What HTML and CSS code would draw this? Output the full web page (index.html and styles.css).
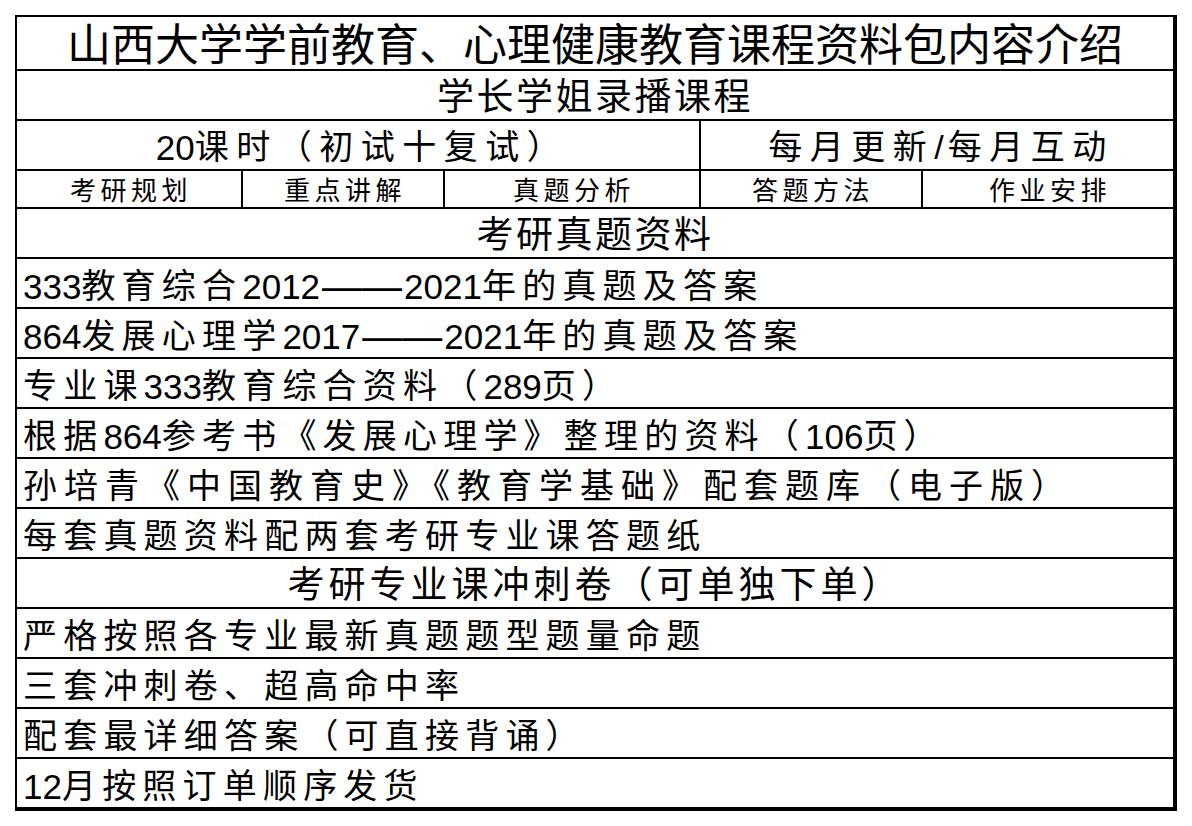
FILE: index.html
```html
<!DOCTYPE html>
<html lang="zh-CN">
<head>
<meta charset="utf-8">
<title>山西大学学前教育、心理健康教育课程资料包内容介绍</title>
<link rel="stylesheet" href="styles.css">
</head>
<body>
<div class="sheet">
  <div class="row title">山西大学学前教育、心理健康教育课程资料包内容介绍</div>
  <div class="row head">学长学姐录播课程</div>
  <div class="row split">
    <div class="cell mid"><span class="d">20</span>课时（初试十复试）</div>
    <div class="cell mid">每月更新<span class="s">/</span>每月互动</div>
  </div>
  <div class="row five">
    <div class="cell sm">考研规划</div>
    <div class="cell sm">重点讲解</div>
    <div class="cell sm">真题分析</div>
    <div class="cell sm">答题方法</div>
    <div class="cell sm">作业安排</div>
  </div>
  <div class="row head">考研真题资料</div>
  <div class="row body"><span class="d">333</span>教育综合<span class="d">2012</span><span class="dash">——</span><span class="d">2021</span>年的真题及答案</div>
  <div class="row body"><span class="d">864</span>发展心理学<span class="d">2017</span><span class="dash">——</span><span class="d">2021</span>年的真题及答案</div>
  <div class="row body">专业课<span class="d">333</span>教育综合资料（<span class="d">289</span>页）</div>
  <div class="row body">根据<span class="d">864</span>参考书《发展心理学》整理的资料（<span class="d">106</span>页）</div>
  <div class="row body wide">孙培青《中国教育史》《教育学基础》配套题库（电子版）</div>
  <div class="row body">每套真题资料配两套考研专业课答题纸</div>
  <div class="row head wide">考研专业课冲刺卷（可单独下单）</div>
  <div class="row body">严格按照各专业最新真题题型题量命题</div>
  <div class="row body">三套冲刺卷、超高命中率</div>
  <div class="row body">配套最详细答案（可直接背诵）</div>
  <div class="row body"><span class="d">12</span>月按照订单顺序发货</div>
</div>
</body>
</html>
```

FILE: styles.css
```css
html, body {
  margin: 0;
  padding: 0;
  background: #ffffff;
}

body {
  font-family: "Liberation Sans", "Noto Sans CJK SC", sans-serif;
  color: #000000;
}

.sheet {
  margin: 15px 0 0 15px;
  width: 1156px;
  border-left: 2px solid #000;
  border-top: 2px solid #000;
  border-right: 4px solid #000;
  border-bottom: 4px solid #000;
  display: flex;
  flex-direction: column;
}

.row {
  box-sizing: border-box;
  height: 50px;
  border-top: 2px solid #000;
  display: flex;
  align-items: center;
  white-space: nowrap;
}

.title {
  height: 52px;
  border-top: none;
  justify-content: center;
  font-size: 44px;
  line-height: 1;
  padding-top: 5px;
}

.head {
  justify-content: center;
  font-size: 37px;
  letter-spacing: 2.5px;
  line-height: 1;
  padding-top: 4px;
}

.head.wide {
  letter-spacing: 4px;
}

.split {
  display: grid;
  grid-template-columns: 682px 474px;
  align-items: stretch;
}

.five {
  height: 38px;
  display: grid;
  grid-template-columns: 224px 202px 256px 222px 252px;
  align-items: stretch;
}

.cell {
  box-sizing: border-box;
  display: flex;
  align-items: center;
  justify-content: center;
  line-height: 1;
}

.cell + .cell {
  border-left: 2px solid #000;
}

.mid {
  font-size: 34px;
  letter-spacing: 7.5px;
  padding-top: 4px;
  padding-left: 8px;
}

.sm {
  font-size: 26px;
  letter-spacing: 4.5px;
  padding-top: 3px;
  padding-left: 4px;
}

.body {
  padding-left: 6px;
  font-size: 34px;
  letter-spacing: 6.2px;
  line-height: 1;
  padding-top: 6px;
}

.body.wide {
  letter-spacing: 7px;
}

.d {
  font-family: "Liberation Sans", sans-serif;
  font-size: 35px;
  letter-spacing: 0;
}

.dash {
  font-family: "Liberation Sans", sans-serif;
  font-size: 40px;
  letter-spacing: 0;
  padding: 0 2px;
}

.s {
  font-family: "Liberation Sans", sans-serif;
  letter-spacing: 4px;
}
```
